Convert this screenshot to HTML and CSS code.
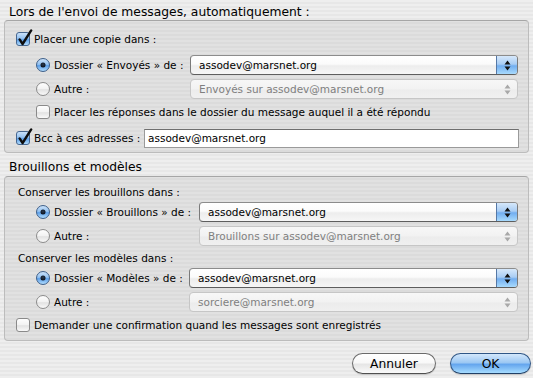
FILE: index.html
```html
<!DOCTYPE html>
<html lang="fr">
<head>
<meta charset="utf-8">
<title>Copies et dossiers</title>
<link rel="stylesheet" href="styles.css">
</head>
<body>
<svg class="defs" width="0" height="0" aria-hidden="true">
  <defs>
    <linearGradient id="g-aqua" x1="0" y1="0" x2="0" y2="1">
      <stop offset="0" stop-color="#cfe4fa"/>
      <stop offset="0.45" stop-color="#94c2f1"/>
      <stop offset="0.55" stop-color="#5d9fe8"/>
      <stop offset="1" stop-color="#b6e0ff"/>
    </linearGradient>
    <linearGradient id="g-white" x1="0" y1="0" x2="0" y2="1">
      <stop offset="0" stop-color="#ffffff"/>
      <stop offset="0.5" stop-color="#f2f2f2"/>
      <stop offset="0.55" stop-color="#e2e2e2"/>
      <stop offset="1" stop-color="#fbfbfb"/>
    </linearGradient>
    <radialGradient id="g-dot" cx="0.5" cy="0.4" r="0.6">
      <stop offset="0" stop-color="#2a3a50"/>
      <stop offset="1" stop-color="#080e18"/>
    </radialGradient>
  </defs>
</svg>

<div class="window">
  <h2 class="section-title">Lors de l'envoi de messages, automatiquement :</h2>
  <div class="group group-send">
    <div class="row row-check">
      <svg class="checkbox" width="17" height="18" viewBox="0 0 17 18"><rect x="0.5" y="3.5" width="13" height="13" rx="2.5" fill="url(#g-aqua)" stroke="#46668f"/><path d="M3.6 10.4 L6.6 15 L15.2 1.4" fill="none" stroke="#0e0e0e" stroke-width="2.4" stroke-linecap="round" stroke-linejoin="round"/></svg>
      <span>Placer une copie dans :</span>
    </div>
    <div class="pair pair-sent">
      <label class="radio-label"><svg class="radio" width="14" height="14" viewBox="0 0 14 14"><circle cx="7" cy="7" r="6.5" fill="url(#g-aqua)" stroke="#3f5f88"/><circle cx="7" cy="7" r="2.5" fill="url(#g-dot)"/></svg><span>Dossier « Envoyés » de :</span></label>
      <div class="popup"><span class="popup-value">assodev@marsnet.org</span><span class="popup-arrows"><svg width="7" height="11" viewBox="0 0 7 11"><path d="M3.5 0.5 L6.5 4.5 L0.5 4.5 Z M0.5 6.5 L6.5 6.5 L3.5 10.5 Z" fill="#111"/></svg></span></div>
      <label class="radio-label"><svg class="radio" width="14" height="14" viewBox="0 0 14 14"><circle cx="7" cy="7" r="6.5" fill="url(#g-white)" stroke="#8a8a8a"/></svg><span>Autre :</span></label>
      <div class="popup disabled"><span class="popup-value">Envoyés sur assodev@marsnet.org</span><span class="popup-arrows"><svg width="7" height="11" viewBox="0 0 7 11"><path d="M3.5 0.5 L6.5 4.5 L0.5 4.5 Z M0.5 6.5 L6.5 6.5 L3.5 10.5 Z" fill="#a8a8a8"/></svg></span></div>
    </div>
    <div class="row row-check indent row-replies">
      <svg class="checkbox" width="17" height="18" viewBox="0 0 17 18"><rect x="0.5" y="3.5" width="13" height="13" rx="2.5" fill="url(#g-white)" stroke="#8a8a8a"/></svg>
      <span>Placer les réponses dans le dossier du message auquel il a été répondu</span>
    </div>
    <div class="row row-check row-bcc">
      <svg class="checkbox" width="17" height="18" viewBox="0 0 17 18"><rect x="0.5" y="3.5" width="13" height="13" rx="2.5" fill="url(#g-aqua)" stroke="#46668f"/><path d="M3.6 10.4 L6.6 15 L15.2 1.4" fill="none" stroke="#0e0e0e" stroke-width="2.4" stroke-linecap="round" stroke-linejoin="round"/></svg>
      <span class="bcc-label">Bcc à ces adresses :</span>
      <span class="textfield">assodev@marsnet.org</span>
    </div>
  </div>

  <h2 class="section-title second">Brouillons et modèles</h2>
  <div class="group group-drafts">
    <div class="caption">Conserver les brouillons dans :</div>
    <div class="pair pair-drafts">
      <label class="radio-label"><svg class="radio" width="14" height="14" viewBox="0 0 14 14"><circle cx="7" cy="7" r="6.5" fill="url(#g-aqua)" stroke="#3f5f88"/><circle cx="7" cy="7" r="2.5" fill="url(#g-dot)"/></svg><span>Dossier « Brouillons » de :</span></label>
      <div class="popup"><span class="popup-value">assodev@marsnet.org</span><span class="popup-arrows"><svg width="7" height="11" viewBox="0 0 7 11"><path d="M3.5 0.5 L6.5 4.5 L0.5 4.5 Z M0.5 6.5 L6.5 6.5 L3.5 10.5 Z" fill="#111"/></svg></span></div>
      <label class="radio-label"><svg class="radio" width="14" height="14" viewBox="0 0 14 14"><circle cx="7" cy="7" r="6.5" fill="url(#g-white)" stroke="#8a8a8a"/></svg><span>Autre :</span></label>
      <div class="popup disabled"><span class="popup-value">Brouillons sur assodev@marsnet.org</span><span class="popup-arrows"><svg width="7" height="11" viewBox="0 0 7 11"><path d="M3.5 0.5 L6.5 4.5 L0.5 4.5 Z M0.5 6.5 L6.5 6.5 L3.5 10.5 Z" fill="#a8a8a8"/></svg></span></div>
    </div>
    <div class="caption">Conserver les modèles dans :</div>
    <div class="pair pair-templates">
      <label class="radio-label"><svg class="radio" width="14" height="14" viewBox="0 0 14 14"><circle cx="7" cy="7" r="6.5" fill="url(#g-aqua)" stroke="#3f5f88"/><circle cx="7" cy="7" r="2.5" fill="url(#g-dot)"/></svg><span>Dossier « Modèles » de :</span></label>
      <div class="popup"><span class="popup-value">assodev@marsnet.org</span><span class="popup-arrows"><svg width="7" height="11" viewBox="0 0 7 11"><path d="M3.5 0.5 L6.5 4.5 L0.5 4.5 Z M0.5 6.5 L6.5 6.5 L3.5 10.5 Z" fill="#111"/></svg></span></div>
      <label class="radio-label"><svg class="radio" width="14" height="14" viewBox="0 0 14 14"><circle cx="7" cy="7" r="6.5" fill="url(#g-white)" stroke="#8a8a8a"/></svg><span>Autre :</span></label>
      <div class="popup disabled"><span class="popup-value">sorciere@marsnet.org</span><span class="popup-arrows"><svg width="7" height="11" viewBox="0 0 7 11"><path d="M3.5 0.5 L6.5 4.5 L0.5 4.5 Z M0.5 6.5 L6.5 6.5 L3.5 10.5 Z" fill="#a8a8a8"/></svg></span></div>
    </div>
    <div class="row row-check row-confirm">
      <svg class="checkbox" width="17" height="18" viewBox="0 0 17 18"><rect x="0.5" y="3.5" width="13" height="13" rx="2.5" fill="url(#g-white)" stroke="#8a8a8a"/></svg>
      <span>Demander une confirmation quand les messages sont enregistrés</span>
    </div>
  </div>

  <div class="buttons">
    <button class="btn">Annuler</button>
    <button class="btn btn-default">OK</button>
  </div>
</div>
</body>
</html>
```

FILE: styles.css
```css
html, body {
  margin: 0;
  padding: 0;
}

body {
  width: 533px;
  height: 378px;
  overflow: hidden;
  font-family: "DejaVu Sans", "Lucida Grande", sans-serif;
  font-size: 10.5px;
  color: #000;
  background: repeating-linear-gradient(to bottom, #eeeeee 0, #eeeeee 2px, #e7e7e7 2px, #e7e7e7 4px);
}

.defs {
  position: absolute;
  width: 0;
  height: 0;
}

.window {
  padding: 0 4px;
  display: flex;
  flex-direction: column;
}

.section-title {
  margin: 0;
  padding: 4px 0 0 5px;
  height: 16px;
  line-height: 16px;
  font-size: 12.3px;
  font-weight: normal;
}

.section-title.second {
  padding-top: 6px;
  height: 17px;
}

.group {
  border: 1px solid #bcbcbc;
  border-top-color: #a6a6a6;
  border-radius: 4px;
  background: rgba(0, 0, 0, 0.05);
  display: flex;
  flex-direction: column;
}

.group-send {
  padding: 8px 10px 4px 11px;
}

.group-drafts {
  padding: 7px 10px 5px 11px;
}

.row {
  display: flex;
  align-items: center;
  height: 20px;
  white-space: nowrap;
}

.row-check .checkbox {
  flex: none;
  margin: -2px 1px 0 0;
}

.indent {
  margin-left: 20px;
}

.row-replies {
  margin-top: 3px;
}

.row-bcc {
  margin-top: 6px;
}

.row-confirm {
  margin-top: 3px;
}

.bcc-label {
  flex: 0 0 110px;
}

.textfield {
  flex: 1;
  height: 19px;
  box-sizing: border-box;
  border: 1px solid #9a9a9a;
  border-top-color: #6f6f6f;
  background: #fff;
  padding: 0 0 0 3px;
  line-height: 17px;
  margin-right: -1px;
}

.caption {
  height: 16px;
  line-height: 16px;
  padding-left: 2px;
  white-space: nowrap;
}

.pair {
  display: grid;
  row-gap: 4px;
  margin-left: 20px;
  align-items: center;
}

.group-send .pair {
  margin-top: 6px;
}

.pair-sent {
  grid-template-columns: 154px 1fr;
}

.pair-drafts {
  grid-template-columns: 163px 1fr;
  margin-top: 2px;
  margin-bottom: 4px;
}

.pair-templates {
  grid-template-columns: 153px 1fr;
  margin-top: 2px;
}

.radio-label {
  display: flex;
  align-items: center;
  gap: 4px;
  white-space: nowrap;
}

.radio {
  flex: none;
}

.popup {
  height: 20px;
  box-sizing: border-box;
  border: 1px solid #7a7a7a;
  border-top-color: #8c8c8c;
  border-bottom-color: #5e5e5e;
  border-radius: 4px;
  background: linear-gradient(to bottom, #ffffff 0%, #fbfbfb 45%, #ededed 55%, #f6f6f6 100%);
  display: flex;
  align-items: center;
  white-space: nowrap;
  overflow: hidden;
}

.popup-value {
  flex: 1;
  padding-left: 8px;
}

.popup-arrows {
  align-self: stretch;
  width: 20px;
  display: flex;
  align-items: center;
  justify-content: center;
  border-left: 1px solid #5578a6;
  background: linear-gradient(to bottom, #d6e8fb 0%, #a9cdf4 45%, #72aef0 55%, #a8dafd 100%);
}

.popup.disabled {
  border-color: #c6c6c6;
  background: linear-gradient(to bottom, #f7f7f7 0%, #f2f2f2 50%, #ececec 55%, #f0f0f0 100%);
  color: #7f7f7f;
}

.popup.disabled .popup-arrows {
  border-left: none;
  background: none;
}

.buttons {
  display: flex;
  justify-content: flex-end;
  gap: 14px;
  margin-top: 12px;
  margin-right: -2px;
}

.btn {
  height: 21px;
  box-sizing: border-box;
  border: 1px solid #6a6a6a;
  border-bottom-color: #505050;
  border-radius: 11px;
  font-family: "DejaVu Sans", "Lucida Grande", sans-serif;
  font-size: 12.3px;
  color: #000;
  padding: 0;
  line-height: 18px;
  background: linear-gradient(to bottom, #ffffff 0%, #f8f8f8 45%, #e6e6e6 55%, #fafafa 100%);
  box-shadow: 0 1px 1px rgba(0, 0, 0, 0.15);
  width: 84px;
}

.btn-default {
  width: 81px;
  border-color: #2f5686;
  border-bottom-color: #203f66;
  background: linear-gradient(to bottom, #d3e7fb 0%, #9cc8f3 45%, #65a6ee 55%, #a6dcff 100%);
}
```
